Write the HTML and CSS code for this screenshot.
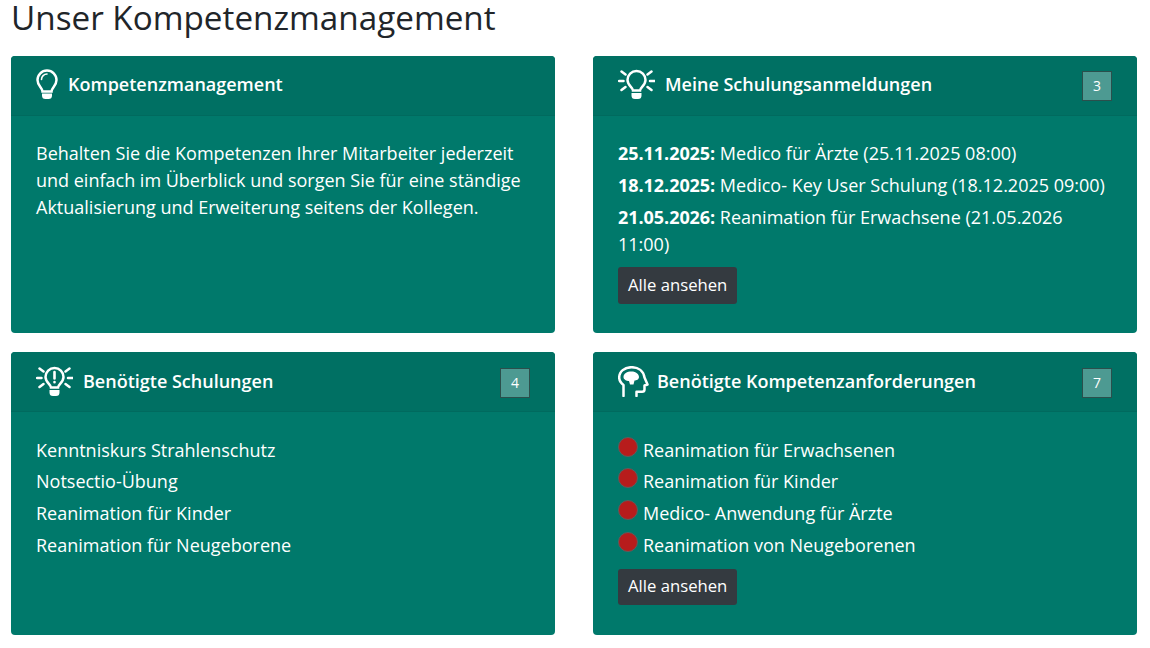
FILE: index.html
```html
<!DOCTYPE html>
<html lang="de">
<head>
    <meta charset="UTF-8">
    <title>Unser Kompetenzmanagement</title>
    <link rel="stylesheet" href="styles.css">
</head>
<body>
    <h1 class="page-title">Unser Kompetenzmanagement</h1>
    <div class="card-grid">
        <div class="card">
            <div class="card-header header-top">
                <svg class="card-icon" width="24" height="31" viewBox="0 0 24 31" fill="none" stroke="#fff" stroke-width="2.500" stroke-linecap="round">
                    <path d="M6.500 22.500c0-3.500-5-5.500-5-11.500a9.500 9.500 0 0 1 19 0c0 6-5 8-5 11.500z"/>
                    <path d="M5.500 10.500a5.500 5.500 0 0 1 5.500-5.500" stroke-width="1.600"/>
                    <path d="M6 24.500h10v2a3.500 3.500 0 0 1-3.500 3.500h-3a3.500 3.500 0 0 1-3.500-3.500z" fill="#fff" stroke="none"/>
                </svg>
                <span class="card-title">Kompetenzmanagement</span>
            </div>
            <div class="card-body">
                <p class="intro">Behalten Sie die Kompetenzen Ihrer Mitarbeiter jederzeit und einfach im Überblick und sorgen Sie für eine ständige Aktualisierung und Erweiterung seitens der Kollegen.</p>
            </div>
        </div>

        <div class="card">
            <div class="card-header header-top">
                <svg class="card-icon icon-wide" width="37" height="31" viewBox="0 0 37 31" fill="none" stroke="#fff" stroke-width="2.500" stroke-linecap="round">
                    <path d="M15 21.500c0-3-5.500-5-5.500-10.500a9 9 0 0 1 18 0c0 5.500-5.500 7.500-5.500 10.500z"/>
                    <path d="M13.500 24h10v2.500a3.500 3.500 0 0 1-3.500 3.500h-3a3.500 3.500 0 0 1-3.500-3.500z" fill="#fff" stroke="none"/>
                    <path d="M1 12h4.500M32 12h4.500M3.500 2.500l4 3M33.500 2.500l-4 3M3.500 21l4-3M33.500 21l-4-3"/>
                </svg>
                <span class="card-title">Meine Schulungsanmeldungen</span>
                <span class="count">3</span>
            </div>
            <div class="card-body">
                <p class="entry"><strong>25.11.2025:</strong> Medico für Ärzte (25.11.2025 08:00)</p>
                <p class="entry"><strong>18.12.2025:</strong> Medico- Key User Schulung (18.12.2025 09:00)</p>
                <p class="entry"><strong>21.05.2026:</strong> Reanimation für Erwachsene (21.05.2026 11:00)</p>
                <a class="btn-all btn-after-entries" href="#">Alle ansehen</a>
            </div>
        </div>

        <div class="card">
            <div class="card-header">
                <svg class="card-icon icon-wide" width="37" height="31" viewBox="0 0 37 31" fill="none" stroke="#fff" stroke-width="2.500" stroke-linecap="round">
                    <path d="M15 21.500c0-3-5.500-5-5.500-10.500a9 9 0 0 1 18 0c0 5.500-5.500 7.500-5.500 10.500z"/>
                    <path d="M13.500 24h10v2.500a3.500 3.500 0 0 1-3.500 3.500h-3a3.500 3.500 0 0 1-3.500-3.500z" fill="#fff" stroke="none"/>
                    <path d="M1 12h4.500M32 12h4.500M3.500 2.500l4 3M33.500 2.500l-4 3M3.500 21l4-3M33.500 21l-4-3"/>
                    <path d="M18.500 6v6.500M18.500 16v.2" stroke-width="2.600"/>
                </svg>
                <span class="card-title">Benötigte Schulungen</span>
                <span class="count">4</span>
            </div>
            <div class="card-body">
                <ul class="plain-list">
                    <li>Kenntniskurs Strahlenschutz</li>
                    <li>Notsectio-Übung</li>
                    <li>Reanimation für Kinder</li>
                    <li>Reanimation für Neugeborene</li>
                </ul>
            </div>
        </div>

        <div class="card">
            <div class="card-header">
                <svg class="card-icon icon-head" width="32" height="31" viewBox="0 0 32 31" fill="none" stroke="#fff" stroke-width="2.500" stroke-linecap="round" stroke-linejoin="round">
                    <path d="M5.500 30v-11C3 17 1.200 14.500 1.200 11.500 1.200 5.500 6.500 1.200 13.500 1.200 20.500 1.200 25.500 5 26.500 11.500L29.500 18.500 26.500 19.500V23.500C26.500 25 25.500 25.800 24 25.800H18.500V30"/>
                    <path d="M5.500 11c0-3.500 3.500-5.500 8-5.500 4.500 0 7.500 2.500 7.500 5.500 0 2.500-2.500 3.500-4.500 3.500l-1 4h-3.500l-1-3.500C8.500 15 5.500 13.500 5.500 11z" fill="#fff" stroke="none"/>
                </svg>
                <span class="card-title">Benötigte Kompetenzanforderungen</span>
                <span class="count">7</span>
            </div>
            <div class="card-body">
                <ul class="plain-list">
                    <li><span class="dot"></span>Reanimation für Erwachsenen</li>
                    <li><span class="dot"></span>Reanimation für Kinder</li>
                    <li><span class="dot"></span>Medico- Anwendung für Ärzte</li>
                    <li><span class="dot"></span>Reanimation von Neugeborenen</li>
                </ul>
                <a class="btn-all btn-after-list" href="#">Alle ansehen</a>
            </div>
        </div>
    </div>
</body>
</html>
```

FILE: styles.css
```css
body {
    margin: 0;
    padding: 0 13px 0 11px;
    background-color: #fff;
    font-family: "Open Sans", sans-serif;
    color: #fff;
}

.page-title {
    margin: 0;
    height: 56px;
    font-size: 33.250px;
    font-weight: 400;
    line-height: 34px;
    color: #212529;
}

.card-grid {
    display: grid;
    grid-template-columns: 544px 544px;
    grid-template-rows: 277px 283px;
    column-gap: 38px;
    row-gap: 19px;
}

.card {
    display: flex;
    flex-direction: column;
    background-color: #00796b;
    border-radius: 4px;
    overflow: hidden;
}

.card-header {
    display: flex;
    align-items: center;
    height: 60px;
    padding: 0 25px;
    box-sizing: border-box;
    background-color: #007063;
    border-bottom: 1px solid #006a5e;
}

.header-top {
    padding-bottom: 2px;
}

.card-icon {
    flex-shrink: 0;
    margin-right: 8px;
}

.icon-wide {
    margin-right: 10px;
}

.icon-head {
    margin-right: 7px;
}

.card-title {
    font-size: 18px;
    font-weight: 600;
    flex-grow: 1;
    margin-bottom: 2px;
}

.count {
    width: 30px;
    height: 30px;
    margin-top: 2px;
    box-sizing: border-box;
    border: 1px solid #2b4f4c;
    background-color: #4d9a92;
    font-size: 14px;
    line-height: 28px;
    text-align: center;
}

.card-body {
    padding: 24px 25px 25px;
    font-size: 18px;
    line-height: 27px;
}

.intro {
    margin: 0;
}

.entry {
    margin: 0 0 5px;
}

.entry strong {
    font-weight: 700;
    letter-spacing: -0.050px;
}

.plain-list {
    margin: 0.700px 0 0;
    padding: 0;
    list-style: none;
}

.plain-list li {
    display: flex;
    height: 31.700px;
}

.dot {
    flex-shrink: 0;
    width: 20px;
    height: 20px;
    margin-right: 5px;
    border-radius: 50%;
    background-color: #b71c1c;
    border: 1px solid #5d5d5d;
    box-sizing: border-box;
}

.btn-all {
    display: inline-block;
    padding: 4px 10px 6px;
    background-color: #343a40;
    border-radius: 3px;
    color: #fff;
    font-size: 16.700px;
    line-height: 27px;
    text-decoration: none;
}

.btn-after-entries {
    margin-top: 4px;
}

.btn-after-list {
    margin-top: 6px;
    padding: 3px 10px 6px;
}
```
